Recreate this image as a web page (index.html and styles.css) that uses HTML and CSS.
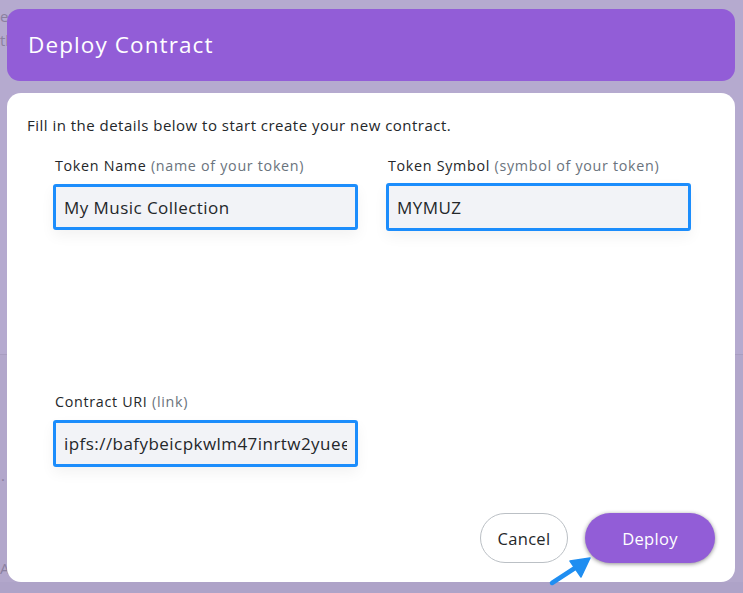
FILE: index.html
```html
<!DOCTYPE html>
<html>
<head>
<meta charset="utf-8">
<link rel="stylesheet" href="styles.css">
</head>
<body>
<div class="page">
  <div class="backdrop">
    <div class="bg-top"><span class="bg-t1">er</span><span class="bg-t2">tl</span></div>
    <div class="bg-bottom"><span class="bg-t3">.</span><span class="bg-t4">A</span></div>
  </div>
  <div class="modal">
    <div class="modal-header">
      <h1 class="title">Deploy Contract</h1>
    </div>
    <div class="modal-card">
      <p class="intro">Fill in the details below to start create your new contract.</p>
      <div class="fields">
        <div class="field">
          <label class="label" for="tname">Token Name <span class="hint">(name of your token)</span></label>
          <input id="tname" class="input" type="text" value="My Music Collection" readonly>
        </div>
        <div class="field">
          <label class="label" for="tsym">Token Symbol <span class="hint">(symbol of your token)</span></label>
          <input id="tsym" class="input tall" type="text" value="MYMUZ" readonly>
        </div>
        <div class="field row2">
          <label class="label" for="turi">Contract URI <span class="hint">(link)</span></label>
          <input id="turi" class="input tall2" type="text" value="ipfs://bafybeicpkwlm47inrtw2yueeqhzs" readonly>
        </div>
      </div>
      <div class="actions">
        <button class="btn btn-cancel">Cancel</button>
        <button class="btn btn-deploy">Deploy</button>
      </div>
    </div>
  </div>
  <svg class="arrow" width="48" height="36" viewBox="0 0 48 36">
    <path d="M4 32 L27 17" stroke="#1f8ef1" stroke-width="4.5" stroke-linecap="round" fill="none"/>
    <path d="M42 7 L22 10 L33 26 Z" fill="#1f8ef1" stroke="#1f8ef1" stroke-width="1.5" stroke-linejoin="round"/>
  </svg>
</div>
</body>
</html>
```
FILE: styles.css
```css
* { box-sizing: border-box; }
html, body { margin: 0; padding: 0; }
body {
  width: 743px;
  height: 593px;
  overflow: hidden;
  background: #b2a7cb;
  font-family: "Open Sans", "Noto Sans", sans-serif;
  color: #24272a;
}
.page {
  position: relative;
  width: 743px;
  height: 593px;
}
.backdrop {
  position: absolute;
  inset: 0;
  display: flex;
  flex-direction: column;
}
.bg-top {
  height: 355px;
  background: #b5aacf;
  border-bottom: 1px solid #a89dc0;
  position: relative;
  color: #8a809f;
  font-size: 15px;
}
.bg-bottom {
  flex: 1;
  position: relative;
  color: #8a809f;
  font-size: 15px;
  border-bottom: 11px solid #aea3c8;
}
.bg-t1 { position: absolute; left: 0; top: 6px; }
.bg-t2 { position: absolute; left: 0; top: 30px; }
.bg-t3 { position: absolute; left: 1px; top: 110px; }
.bg-t4 { position: absolute; left: 0; top: 203px; }

.modal {
  position: relative;
  padding: 9px 8px 0 7px;
  display: flex;
  flex-direction: column;
  gap: 12px;
}
.modal-header {
  height: 72px;
  background: #925dd7;
  border-radius: 13px;
  display: flex;
  align-items: center;
  padding-left: 21px;
}
.title {
  margin: 0;
  font-weight: 400;
  font-size: 22.5px;
  color: #ffffff;
  letter-spacing: 1.1px;
  padding-bottom: 2px;
}
.modal-card {
  height: 489px;
  background: #ffffff;
  border-radius: 14px;
  padding: 19px 20px 0 20px;
  display: flex;
  flex-direction: column;
}
.intro {
  margin: 0;
  font-size: 15px;
  line-height: 26px;
  letter-spacing: 0.48px;
  color: #24272a;
}
.fields {
  margin-top: 19px;
  padding-left: 26px;
  display: grid;
  grid-template-columns: 305px 305px;
  column-gap: 28px;
  row-gap: 162px;
}
.field {
  display: flex;
  flex-direction: column;
  gap: 9px;
}
.field.row2 { grid-column: 1; }
.label {
  font-size: 14.3px;
  line-height: 18px;
  padding-left: 2px;
  letter-spacing: 0.7px;
  color: #24272a;
}
.hint { color: #6a737d; }
.input {
  display: block;
  width: 100%;
  height: 46px;
  margin: 0;
  border: 3px solid #1c8dfc;
  border-radius: 3px;
  background: #f2f3f7;
  font-family: inherit;
  font-size: 17px;
  letter-spacing: 0.45px;
  padding: 0 8px;
  color: #24272a;
  box-shadow: 0 6px 14px rgba(0,0,0,0.05);
  outline: none;
}
.input.tall { height: 48px; margin-top: -1px; }
.input.tall2 { height: 47px; }
.actions {
  margin-top: auto;
  margin-bottom: 19px;
  display: flex;
  justify-content: flex-end;
  gap: 17px;
}
.btn {
  height: 50px;
  border-radius: 25px;
  font-family: inherit;
  font-size: 16.5px;
  letter-spacing: 0.3px;
  cursor: pointer;
}
.btn-cancel {
  width: 88px;
  background: #ffffff;
  border: 1.5px solid #bbc0c5;
  color: #24272a;
}
.btn-deploy {
  width: 130px;
  background: #925dd7;
  border: none;
  color: #ffffff;
  box-shadow: 0 1px 4px rgba(0,0,0,0.45);
}
.arrow {
  position: absolute;
  left: 548px;
  top: 551px;
}
```
